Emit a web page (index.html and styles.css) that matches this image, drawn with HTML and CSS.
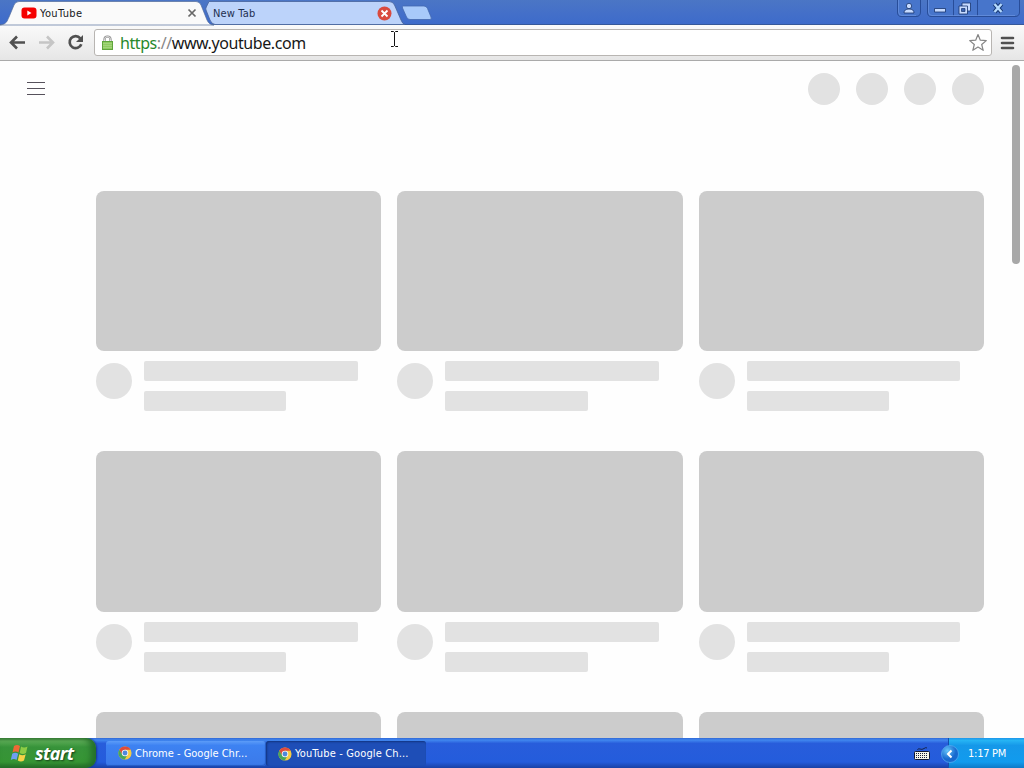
FILE: index.html
```html
<!DOCTYPE html>
<html lang="en">
<head>
<meta charset="utf-8">
<title>YouTube</title>
<link rel="stylesheet" href="styles.css">
</head>
<body>
<svg width="0" height="0" class="defs">
  <symbol id="chrome" viewBox="0 0 16 16">
    <circle cx="8" cy="8" r="7.5" fill="#f5ca43"/>
    <path d="M1.5 4.2A7.5 7.5 0 0 1 14.5 4.2H8L4.7 10Z" fill="#de4b3d"/>
    <path d="M1.5 4.2A7.5 7.5 0 0 0 7.7 15.5L11 9.8 4.8 9.7Z" fill="#48a65b"/>
    <circle cx="8" cy="8" r="3.7" fill="#f4f4f4"/><circle cx="8" cy="8" r="2.8" fill="#4d87dc"/>
  </symbol>
</svg>
<div class="screen">
  <header class="tabstrip">
    <div class="tab active">
      <svg class="shape" width="222" height="25"><path d="M0 25C7 24 7 21 9 17L14 5Q15.500 1.500 19 1.500H196Q199.500 1.500 201 5L207 20Q209 25 214 25Z" fill="#fafafa" stroke="#536d9b" stroke-width=".7"/></svg>
      <svg class="fav" width="16" height="12"><rect x=".5" y=".5" width="15" height="11" rx="3" fill="#f50000"/><path d="M6.300 3.500L10.500 6 6.300 8.500Z" fill="#fff"/></svg>
      <span class="title t1">YouTube</span>
      <svg class="close" width="10" height="10"><path d="M1.500 1.500L8.500 8.500M8.500 1.500L1.500 8.500" stroke="#686868" stroke-width="1.700"/></svg>
    </div>
    <div class="tab idle">
      <svg class="shape" width="200" height="25"><path d="M3 1.500H183Q187 1.500 188.500 5L195 20Q196.500 24 199 24.500H9Q5.500 24 4 20L0 10Q-.5 9 .3 7Z" fill="#bcd3fa" stroke="#46639b" stroke-width=".8"/></svg>
      <span class="title t2">New Tab</span>
      <svg class="closered" width="15" height="15"><circle cx="7.500" cy="7.500" r="7" fill="#d94a3e"/><path d="M4.500 4.500L10.500 10.500M10.500 4.500L4.500 10.500" stroke="#fff" stroke-width="1.800"/></svg>
    </div>
    <svg class="newtab" width="31" height="16"><path d="M2 1H23Q25.500 1 26.500 3.500L30 12Q31 14.500 29 14.500H9Q6.500 14.500 5.500 12L1.500 3Q1 1 2 1Z" fill="#a8cafa" stroke="#4268ae" stroke-width=".8"/></svg>
    <svg class="winctl" width="128" height="20">
      <g fill="#4775cb" stroke="#284d99"><path d="M1.500-3V12Q1.500 16.500 5 16.500H20Q24.500 16.500 24.500 12V-3ZM31.500-3V12Q31.500 16.500 35 16.500H119Q123.500 16.500 123.500 12V-3ZM57.500 0V16.500M81.500 0V16.500"/></g>
      <path d="M2.500 0V12Q3 15.500 6 15.500H20M32.500 0V12Q33 15.500 36 15.500H119" fill="none" stroke="#6b94df" stroke-width=".7"/>
      <g fill="#c7dbff" stroke="#16346c" stroke-width=".8"><circle cx="13" cy="6" r="2.700"/><path d="M8 13Q8 9 13 9T18 13ZM38.500 8.500H49.500V12H38.500ZM66 3H74.500V11H66Z"/><path d="M63 6H71.500V14H63Z"/></g>
      <path d="M65.500 8.500H69V11.500H65.500Z" fill="#3d65b4" stroke="#16346c" stroke-width=".7"/>
      <path d="M98.500 4L105.500 12M105.500 4L98.500 12" stroke="#173773" stroke-width="4.200"/><path d="M98.500 4L105.500 12M105.500 4L98.500 12" stroke="#b5daff" stroke-width="2.400"/>
    </svg>
  </header>

  <nav class="toolbar">
    <svg class="navicons" width="94" height="35" fill="none">
      <path d="M25 17.500H11M17 11.500L11 17.500 17 23.500" stroke="#505050" stroke-width="2.600"/>
      <path d="M39 17.500H53M47 11.500L53 17.500 47 23.500" stroke="#c5c5c5" stroke-width="2.600"/>
      <path d="M80.300 13.300A6 6 0 1 0 81.300 19.200" stroke="#505050" stroke-width="2.700"/><path d="M83 10V17H76Z" fill="#505050"/>
    </svg>
    <div class="address">
      <svg class="lock" width="13" height="16"><path d="M3.500 7V4.500Q3.500 1.500 6.500 1.500T9.500 4.500V7" fill="none" stroke="#888" stroke-width="2.200"/><path d="M3.500 7V4.500Q3.500 1.500 6.500 1.500T9.500 4.500V7" fill="none" stroke="#e6e6e6"/><rect x="1.500" y="6.500" width="10" height="8" fill="#8fcb60" stroke="#60a43d"/><path d="M2 8.500H11M2 10.500H11M2 12.500H11" stroke="#acd988" stroke-width=".7"/></svg>
      <span class="url"><span class="secure">https</span><span class="slashes">://</span>www.youtube.com</span>
      <svg class="star" width="20" height="19"><path d="M10 1.500L12.300 7.200 18.300 7.600 13.700 11.500 15.200 17.300 10 14.100 4.800 17.300 6.300 11.500 1.700 7.600 7.700 7.200Z" fill="#fff" stroke="#858585" stroke-width="1.200" stroke-linejoin="round"/></svg>
      <svg class="cursor" width="9" height="17"><path d="M1 .5H3.500L4.500 1.500 5.500.5H8M4.500 1.500V15M1 15.500H3.500L4.500 14.500 5.500 15.500H8" fill="none" stroke="#111"/></svg>
    </div>
    <svg class="menu" width="16" height="14"><path d="M2 2H13M2 7H13M2 12H13" stroke="#505050" stroke-width="2.600" stroke-linecap="round"/></svg>
  </nav>

  <main class="page">
    <div class="masthead">
      <svg class="guide" width="18" height="14"><path d="M0 .5H18M0 6.500H18M0 12.500H18" stroke="#56515b"/></svg>
      <div class="actions"><i></i><i></i><i></i><i></i></div>
    </div>
    <div class="grid">
      <article><div class="thumb"></div><div class="details"><i></i><div class="lines"><b></b><b></b></div></div></article>
      <article><div class="thumb"></div><div class="details"><i></i><div class="lines"><b></b><b></b></div></div></article>
      <article><div class="thumb"></div><div class="details"><i></i><div class="lines"><b></b><b></b></div></div></article>
      <article><div class="thumb"></div><div class="details"><i></i><div class="lines"><b></b><b></b></div></div></article>
      <article><div class="thumb"></div><div class="details"><i></i><div class="lines"><b></b><b></b></div></div></article>
      <article><div class="thumb"></div><div class="details"><i></i><div class="lines"><b></b><b></b></div></div></article>
      <article><div class="thumb"></div></article>
      <article><div class="thumb"></div></article>
      <article><div class="thumb"></div></article>
    </div>
    <div class="scroll"></div>
  </main>

  <footer class="taskbar">
    <div class="start">
      <svg width="20" height="20"><path d="M4 3Q7 .8 10 3L8.500 9.500Q5.500 7.500 2.500 9.500Z" fill="#ee6835"/><path d="M11 3.500Q14 5.300 17.500 3.500L16 10Q13 11.800 9.700 10Z" fill="#8dcc45"/><path d="M2.200 10.700Q5.200 8.800 8.200 10.700L6.500 17Q4 15 .8 17Z" fill="#6e9ff1"/><path d="M9.300 11.300Q12.500 13.200 15.700 11.300L14 17.600Q11 19.500 7.800 17.600Z" fill="#f5d247"/></svg>
      <span>start</span>
    </div>
    <div class="task"><svg width="14" height="14"><use href="#chrome"/></svg><span>Chrome - Google Chr...</span></div>
    <div class="task selected"><svg width="14" height="14"><use href="#chrome"/></svg><span>YouTube - Google Ch...</span></div>
    <svg class="keyboard" width="16" height="14"><path d="M3.500 3Q4 1 6 2T10 1.500T13 1" fill="none" stroke="#172550"/><rect x=".5" y="4.500" width="15" height="8" rx="1" fill="#f5f5e9" stroke="#101832"/><path d="M2 6.500H14M2 8.500H14M2 10.500H14" stroke="#17203d" stroke-dasharray="1 1"/></svg>
    <div class="tray">
      <svg class="chevron" width="20" height="20"><defs><radialGradient id="orb" cx=".35" cy=".3"><stop stop-color="#65c4fa"/><stop offset="1" stop-color="#1769cf"/></radialGradient></defs><circle cx="10" cy="10" r="8.500" fill="url(#orb)" stroke="#5aaff0" stroke-width=".7"/><path d="M11.500 6.500L8 10 11.500 13.500" fill="none" stroke="#fff" stroke-width="2"/></svg>
      <span>1:17 PM</span>
    </div>
  </footer>
</div>
</body>
</html>
```
FILE: styles.css
```css
* { box-sizing: border-box; }
body { margin: 0; font-family: "DejaVu Sans Condensed", "DejaVu Sans", sans-serif; font-size: 11px; overflow: hidden; }
svg { display: block; flex: none; }
.defs { position: absolute; }
.screen { width: 1024px; height: 768px; display: flex; flex-direction: column; background: #fff; }
.tabstrip { height: 25px; flex: none; display: flex; background: linear-gradient(#4b76c5, #436fc9 60%, #3e6bca); border-bottom: 1px solid #365899; }
.tab { height: 25px; position: relative; display: flex; align-items: center; }
.active { width: 206px; padding: 1px 0 0 21px; z-index: 2; }
.idle { width: 195px; padding: 1px 0 0 7px; }
.shape { position: absolute; left: 0; top: 0; overflow: visible; }
.fav, .title, .close, .closered { position: relative; white-space: nowrap; }
.title { margin-left: 3px; line-height: 16px; color: #17191c; top: .5px; }
.t1 { width: 147px; letter-spacing: .35px; }
.t2 { margin-left: 0; width: 164px; color: #1e2f50; letter-spacing: .15px; }
.newtab { margin-top: 5px; }
.winctl { margin-left: auto; }
.toolbar { height: 36px; flex: none; display: flex; align-items: center; background: linear-gradient(#fafafa, #e6e6e6); border-bottom: 1px solid #aaa; }
.address { width: 898px; height: 27px; display: flex; align-items: center; position: relative; padding: 0 3px 0 6px; border: 1px solid #b8b5b2; border-radius: 3px; background: #fff; }
.url { margin-left: 6px; font-size: 16px; letter-spacing: -.42px; white-space: nowrap; color: #171717; font-family: "Noto Sans", sans-serif; line-height: 24px; }
.secure { color: #27882b; }
.slashes { color: #888; }
.star { margin-left: auto; }
.cursor { position: absolute; left: 295px; top: 1px; }
.menu { margin-left: 8px; }
.page { height: 677px; overflow: hidden; position: relative; background: #fefefe; }
.masthead { height: 129.9px; display: flex; justify-content: space-between; padding: 12px 40px 0 27px; }
.guide { margin-top: 9px; }
.actions { display: flex; gap: 16px; }
.actions i { width: 32px; height: 32px; border-radius: 50%; background: #e2e2e2; }
.grid { display: grid; grid-template-columns: repeat(3, 1fr); gap: 0 16px; padding: 0 40px 0 96px; }
article { height: 260.5px; }
.thumb { height: 160.5px; border-radius: 8px; background: #ccc; }
.details { display: flex; padding-top: 10px; }
.details i { width: 36px; height: 36px; margin: 2px 12px 0 0; border-radius: 50%; background: #e2e2e2; }
.lines { flex: 1; display: flex; flex-direction: column; gap: 10px; }
.lines b { width: 213.5px; height: 20px; border-radius: 2px; background: #e2e2e2; }
.lines b + b { width: 142.4px; }
.scroll { position: absolute; right: 4px; top: 4px; width: 8px; height: 199px; border-radius: 4px; background: #a8a8a8; }
.taskbar { height: 30px; display: flex; background: linear-gradient(#3168d5, #4087ef 7%, #285ddb 18%, #245cdc 80%, #1941a5); color: #fff; }
.start { width: 96px; display: flex; align-items: center; gap: 5px; padding-left: 10px; border-radius: 0 10px 10px 0; background: linear-gradient(#45833e, #5eae58 10%, #37933a 30%, #369534 80%, #246d27); box-shadow: inset -5px 0 6px #246f29, 1px 0 2px #17378d; font: italic bold 18px "Open Sans", sans-serif; text-shadow: 1px 1px 2px #153d18; }
.start span { letter-spacing: -.6px; line-height: 28px; }
.task { width: 160px; height: 25px; margin: 3px 0 0 10px; padding: 0 0 1px 12px; display: flex; align-items: center; gap: 3px; border-radius: 3px; white-space: nowrap; background: linear-gradient(#5c9cf8, #3d82f2 18%, #3b79e9); box-shadow: inset -1px -1px 1px #245ac4; }
.task span { letter-spacing: 0; }
.selected { margin-left: 0; background: #1e4eb7; box-shadow: inset 1px 1px 2px #12347e; padding-top: 1px; }
.selected span { letter-spacing: .14px; }
.keyboard { margin: 9px 0 0 auto; }
.tray { width: 76px; margin-left: 18px; position: relative; display: flex; align-items: center; padding-left: 19px; background: linear-gradient(#1e95e9, #26b4f4 8%, #1598e9 25%, #119bee 80%, #0d79c7); border-left: 1px solid #124fac; }
.tray span { white-space: nowrap; letter-spacing: -.25px; }
.chevron { position: absolute; left: -9px; top: 6px; }
```
